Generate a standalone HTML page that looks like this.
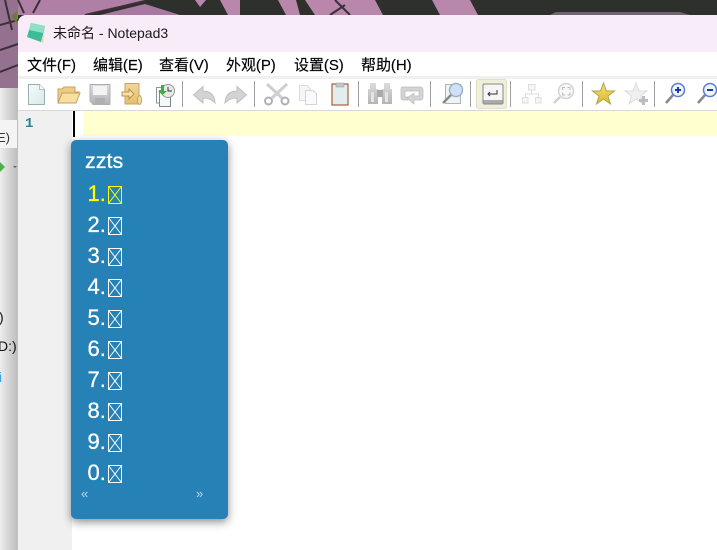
<!DOCTYPE html>
<html><head><meta charset="utf-8"><style>
html,body{margin:0;padding:0}
body{width:717px;height:550px;overflow:hidden;position:relative;background:#fff;font-family:"Liberation Sans","Noto Sans CJK SC",sans-serif}
.a{position:absolute}
.m{position:absolute;top:55px;font-size:15px;line-height:20px;color:#000;white-space:nowrap;letter-spacing:-.05px;-webkit-text-stroke:.15px #000}
.sep{position:absolute;top:81px;width:1px;height:26px;background:#a0a0a0}
.n{position:absolute;left:87.500px;font-size:22px;line-height:26px;color:#fff;-webkit-text-stroke:.3px currentColor}
</style></head><body>
<svg class="a" style="left:0;top:0" width="717" height="90" viewBox="0 0 717 90">
<rect width="717" height="90" fill="#2e302c"/>
<path d="M0 0H145L85 15H0Z" fill="#b07fa6"/>
<path d="M0 0H18V90H0Z" fill="#94728f"/>
<path d="M100 15L145 4L180 15Z" fill="#a878a0"/>
<path d="M195 0H206L200 7ZM220 0H240V15H228ZM278 0H296L300 15H286ZM305 0H375L383 15H315ZM432 0H470L478 15H440Z" fill="#b986ac"/>
<path d="M550 15L556 12H680L690 15Z" fill="#6f6570"/>
<path d="M0 25L18 20M0 50L18 44M5 0L12 30M0 72L18 65M85 15L145 1M18 0L24 13M40 0L33 13M335 0L350 15M345 5L330 15" stroke="#3b2f3a" stroke-width="2" fill="none"/>
<path d="M11 16L17 11V24Z" fill="#6d7a3c"/>
</svg>
<div class="a" style="left:0;top:88px;width:18px;height:462px;background:linear-gradient(90deg,#ededed,#bcbcbc)"></div>
<div class="a" style="left:0;top:120px;width:17px;height:28px;background:#f4f4f4"></div>
<div class="a" style="left:-3px;top:130px;font-size:13px;color:#333">E)</div>
<svg class="a" style="left:0;top:160px" width="18" height="14"><path d="M0 2L5 7L0 12Z" fill="#4cb04c"/><path d="M13 6H17L15 8Z" fill="#666"/></svg>
<div class="a" style="left:-1px;top:309px;font-size:14px;color:#111">)</div>
<div class="a" style="left:-2px;top:338px;font-size:14px;color:#111">D:)</div>
<div class="a" style="left:-1px;top:369px;font-size:14px;color:#38a8e0">i</div>

<div class="a" style="left:18px;top:15px;width:699px;height:535px;background:#fff;border-radius:8px 0 0 0;overflow:hidden">
 <div class="a" style="left:0;top:0;width:699px;height:37px;background:#f8ecf8"></div>
 <div class="a" style="left:0;top:61px;width:699px;height:3px;background:#f0f0f0"></div>
 <div class="a" style="left:0;top:95px;width:699px;height:1px;background:#d8d8d8"></div>
 <div class="a" style="left:0;top:96px;width:54px;height:439px;background:#f0f0f0"></div>
 <div class="a" style="left:65px;top:96px;width:634px;height:25px;background:#ffffcf"></div>
 <div class="a" style="left:55px;top:96px;width:2px;height:26px;background:#000"></div>
</div>
<svg class="a" style="left:26px;top:22px" width="20" height="22"><path d="M5 1L19 4L15 20L1 15Z" fill="#3cbc98"/><path d="M5 1L19 4L17 11L3 8Z" fill="#8fe0c4"/><path d="M19 5L17 21L15 20Z" fill="#e8d8a8"/></svg>
<div class="a" style="left:53px;top:24px;font-size:14px;line-height:18px;color:#1a1a1a;white-space:nowrap">未命名 - Notepad3</div>
<div class="m" style="left:27px;top:56px">文件(F)</div>
<div class="m" style="left:93px;top:56px">编辑(E)</div>
<div class="m" style="left:159px;top:56px">查看(V)</div>
<div class="m" style="left:226px;top:56px">外观(P)</div>
<div class="m" style="left:294px;top:56px">设置(S)</div>
<div class="m" style="left:361px;top:56px">帮助(H)</div>

<svg class="a" style="left:0;top:76px" width="717" height="34" viewBox="0 76 717 34" fill="none">
<defs>
<linearGradient id="gy" x1="0" y1="0" x2="0" y2="1"><stop offset="0" stop-color="#dcdcdc"/><stop offset="1" stop-color="#b4b4b4"/></linearGradient>
<linearGradient id="yl" x1="0" y1="0" x2="0" y2="1"><stop offset="0" stop-color="#f8e070"/><stop offset="1" stop-color="#d8bc30"/></linearGradient>
<linearGradient id="wh" x1="0" y1="0" x2="1" y2="1"><stop offset="0" stop-color="#f6fbfb"/><stop offset="1" stop-color="#d8e8e8"/></linearGradient>
<linearGradient id="or" x1="0" y1="0" x2="0" y2="1"><stop offset="0" stop-color="#f0d698"/><stop offset="1" stop-color="#e4c070"/></linearGradient>
</defs>
<!-- new -->
<path d="M28.500 84.500H39.500L44.500 89.500V104.500H28.500Z" fill="url(#wh)" stroke="#9ab0b0"/><path d="M39.500 84.500V89.500H44.500" fill="#fff" stroke="#b0c0c0"/>
<!-- open -->
<path d="M58 102V89H62L64 87H75V92H79L75 102Z" fill="#eccb84" stroke="#c8a45e"/><path d="M58 103L62 93H80L76 103Z" fill="#f8dea0" stroke="#c0a060"/>
<!-- save -->
<path d="M90 84.500H110V104.500H93L90 101Z" fill="url(#gy)" stroke="#b0b0b0"/><rect x="93" y="86" width="14" height="9" fill="#f4f4f4"/><rect x="95" y="98" width="10" height="6" fill="#b0b0b0"/>
<!-- save as -->
<path d="M125 83.500H139V104H125Z" fill="url(#or)" stroke="#c8a45e"/><path d="M122 92H129V89L134 94L129 99V96H122Z" fill="#f8e0a8" stroke="#b89450"/><ellipse cx="139.500" cy="100" rx="2" ry="4.500" fill="#f4dca0" stroke="#c0a060"/>
<!-- recent -->
<path d="M156.500 87.500H166V103H156.500Z" fill="#fff" stroke="#899"/><path d="M159.500 90.500H170.500V106.500H159.500Z" fill="#f4f8f8" stroke="#7a8a8a"/><circle cx="168" cy="91" r="6.500" fill="#e8e8e8" stroke="#999"/><path d="M168 87V91H172" stroke="#333"/><path d="M161 85V91H158L162.500 95L167 91H164V85Z" fill="#3ab03a"/>
<!-- undo/redo -->
<path d="M193.500 95L203 86.500V91C210 91 215 95 215 103C212 99 208 98 203 98V103Z" fill="#d4d4d4" stroke="#c0c0c0"/>
<path d="M246.500 95L237 86.500V91C230 91 225 95 225 103C228 99 232 98 237 98V103Z" fill="#d4d4d4" stroke="#c0c0c0"/>
<!-- cut -->
<path d="M267 84L282 98M287 84L272 98" stroke="#cfcfcf" stroke-width="3"/><circle cx="268.500" cy="101" r="3.500" stroke="#b0b0b0" stroke-width="2"/><circle cx="285" cy="101" r="3.500" stroke="#b0b0b0" stroke-width="2"/>
<!-- copy -->
<path d="M299.500 85.500H307L310.500 89V100.500H299.500Z" fill="#f6f6f6" stroke="#dcdcdc"/><path d="M305.500 90.500H313L316.500 94V104.500H305.500Z" fill="#fafafa" stroke="#d4d4d4"/>
<!-- paste -->
<rect x="332" y="84" width="16" height="21" fill="#e2eeee" stroke="#a8603a" stroke-width="1.200"/><rect x="336" y="83" width="8" height="4" fill="#c4c4c4" stroke="#999" stroke-width=".5"/>
<!-- binoculars -->
<path d="M370 83H376V89H378V104H368V89H370ZM384 83H390V89H392V104H382V89H384Z" fill="url(#gy)"/><rect x="377" y="90" width="6" height="7" fill="#aaa"/><rect x="371" y="92" width="3" height="10" fill="#e4e4e4"/><rect x="385" y="92" width="3" height="10" fill="#e4e4e4"/>
<!-- replace -->
<path d="M403 87H420Q423 87 423 90V97Q423 100 420 100H414V104L407 98L414 93V96H419V91H405V97H408V100H403Q401 100 401 97V89Q401 87 403 87Z" fill="#d4d4d4" stroke="#bbb" stroke-width=".7"/>
<!-- find in files -->
<rect x="445.500" y="84.500" width="15" height="19" fill="#eef4f2" stroke="#aab8b4"/><circle cx="456" cy="90" r="6.500" fill="#d0e0f6" stroke="#9cb0cc" stroke-width="1.500"/><path d="M451 95L443 103" stroke="#888" stroke-width="2.500"/>
<!-- word wrap active -->
<rect x="476.500" y="79.500" width="30" height="29" rx="2" fill="#efefdc" stroke="#e0e0c4"/>
<rect x="483" y="84" width="20" height="20" rx="1.500" fill="#f6f6f6" stroke="#888"/><path d="M483.500 100H502.500V103.500H483.500Z" fill="#aaa"/><path d="M497 90V94H488M490 92L488 94L490 96" stroke="#333"/>
<!-- tree/sitemap -->
<path d="M528.500 84.500H535V90H528.500ZM522.500 97.500H528V103H522.500ZM535.500 97.500H541V103H535.500Z" fill="#f6f6f6" stroke="#dcdcdc"/><path d="M531.500 90V94M525.500 97V94H538.500V97" stroke="#dcdcdc"/>
<!-- focus zoom -->
<circle cx="566" cy="91" r="7.500" fill="#f8f8f8" stroke="#d4d4d4" stroke-width="1.500"/><path d="M560 97L554 103" stroke="#d0d0d0" stroke-width="2.500"/><path d="M562.500 90V87.500H565M567.500 87.500H570V90M570 92.500V95H567.500M565 95H562.500V92.500" stroke="#bbb"/>
<!-- stars -->
<path d="M603.500 83L606.500 91H614.500L608 96L610.500 104L603.500 99L596.500 104L599 96L592.500 91H600.500Z" fill="url(#yl)" stroke="#b0a24a"/>
<path d="M636 83L639 91H647L640.500 96L643 104L636 99L629 104L631.500 96L625 91H633Z" fill="#f0f0f0" stroke="#dcdcdc"/><path d="M642 96H645V99H648V102H645V105H642V102H639V99H642Z" fill="#bcbcbc"/>
<!-- zoom -->
<circle cx="678" cy="90" r="6.500" fill="#eef3fc" stroke="#5a7cd4" stroke-width="1.500"/><path d="M678 87V93M675 90H681" stroke="#1a3aa8" stroke-width="2"/><path d="M673 95L666 103" stroke="#888" stroke-width="2.500"/>
<circle cx="710" cy="90" r="6.500" fill="#eef3fc" stroke="#5a7cd4" stroke-width="1.500"/><path d="M707 90H713" stroke="#1a3aa8" stroke-width="2"/><path d="M705 95L698 103" stroke="#888" stroke-width="2.500"/>
</svg>
<div class="sep" style="left:182px"></div><div class="sep" style="left:254px"></div><div class="sep" style="left:358px"></div><div class="sep" style="left:430px"></div><div class="sep" style="left:470px"></div><div class="sep" style="left:510px"></div><div class="sep" style="left:582px"></div><div class="sep" style="left:654px"></div>
<div class="a" style="left:25px;top:116px;font:bold 14px 'Liberation Mono',monospace;color:#2a7f8f">1</div>

<div class="a" style="left:71px;top:140px;width:157px;height:379px;background:#2581b6;border-radius:5px;box-shadow:0 3px 9px rgba(0,0,0,.45)"></div>
<div class="a" style="left:85px;top:148px;font-size:21.500px;line-height:26px;color:#fff;-webkit-text-stroke:.3px #fff">zzts</div>
<div class="n" style="top:181px;color:#ff0">1.</div>
<div class="n" style="top:212px">2.</div>
<div class="n" style="top:243px">3.</div>
<div class="n" style="top:274px">4.</div>
<div class="n" style="top:305px">5.</div>
<div class="n" style="top:336px">6.</div>
<div class="n" style="top:367px">7.</div>
<div class="n" style="top:398px">8.</div>
<div class="n" style="top:429px">9.</div>
<div class="n" style="top:460px">0.</div>
<svg class="a" style="left:108px;top:186px" width="15" height="300" fill="none">
<g stroke="#fff"><path stroke="#ff0" d="M.5.500H13.500V17.500H.5ZM.5.500L13.500 17.500M13.500.500L.5 17.500"/>
<path d="M.5 31.500H13.500V48.500H.5ZM.5 31.500L13.500 48.500M13.500 31.500L.5 48.500"/>
<path d="M.5 62.500H13.500V79.500H.5ZM.5 62.500L13.500 79.500M13.500 62.500L.5 79.500"/>
<path d="M.5 93.500H13.500V110.500H.5ZM.5 93.500L13.500 110.500M13.500 93.500L.5 110.500"/>
<path d="M.5 124.500H13.500V141.500H.5ZM.5 124.500L13.500 141.500M13.500 124.500L.5 141.500"/>
<path d="M.5 155.500H13.500V172.500H.5ZM.5 155.500L13.500 172.500M13.500 155.500L.5 172.500"/>
<path d="M.5 186.500H13.500V203.500H.5ZM.5 186.500L13.500 203.500M13.500 186.500L.5 203.500"/>
<path d="M.5 217.500H13.500V234.500H.5ZM.5 217.500L13.500 234.500M13.500 217.500L.5 234.500"/>
<path d="M.5 248.500H13.500V265.500H.5ZM.5 248.500L13.500 265.500M13.500 248.500L.5 265.500"/>
<path d="M.5 279.500H13.500V296.500H.5ZM.5 279.500L13.500 296.500M13.500 279.500L.5 296.500"/></g></svg>
<div class="a" style="left:81px;top:487px;font-size:13px;line-height:14px;color:#c6d6e0">«</div>
<div class="a" style="left:196px;top:487px;font-size:13px;line-height:14px;color:#c6d6e0">»</div>
</body></html>
